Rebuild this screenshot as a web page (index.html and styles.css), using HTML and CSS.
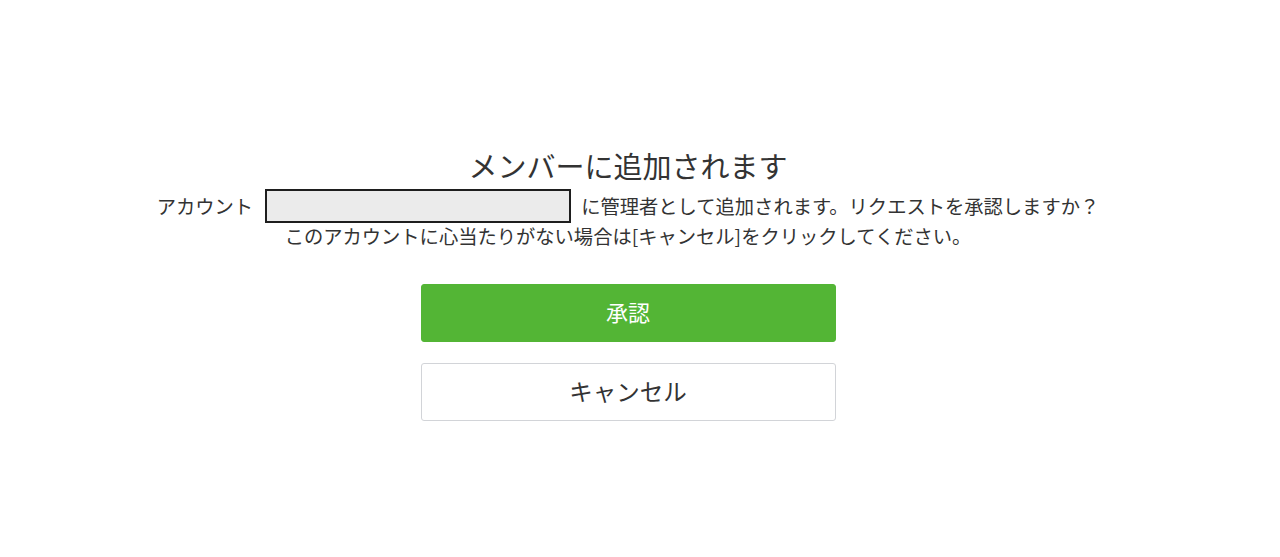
FILE: index.html
```html
<!DOCTYPE html>
<html lang="ja">
<head>
<meta charset="utf-8">
<link rel="stylesheet" href="styles.css">
</head>
<body>
<main class="page">
  <h1 class="title">メンバーに追加されます</h1>
  <p class="line line-account">アカウント<span class="redacted"></span>に管理者として追加されます。リクエストを承認しますか？</p>
  <p class="line line-note">このアカウントに心当たりがない場合は[キャンセル]をクリックしてください。</p>
  <div class="actions">
    <button class="btn btn-primary" type="button">承認</button>
    <button class="btn btn-secondary" type="button">キャンセル</button>
  </div>
</main>
</body>
</html>
```
FILE: styles.css
```css
html, body {
  margin: 0;
  padding: 0;
  background: #fff;
}
body {
  font-family: "Noto Sans CJK JP", "Noto Sans", sans-serif;
  color: #333;
}
.page {
  display: flex;
  flex-direction: column;
  align-items: center;
  padding: 145px 24px 0 0;
}
.title {
  margin: 0;
  font-size: 29px;
  font-weight: 400;
  line-height: 40px;
  color: #333;
}
.line {
  margin: 0;
  font-size: 19.3px;
  line-height: 30px;
  white-space: nowrap;
}
.line-account {
  margin-top: 4px;
  display: flex;
  align-items: center;
  height: 34px;
}
.line-note {
  line-height: 27px;
}
.redacted {
  display: inline-block;
  width: 302px;
  height: 30px;
  margin: 0 10px 0 12px;
  background: #ebebeb;
  border: 2px solid #1e1e1e;
}
.actions {
  margin-top: 34px;
  display: flex;
  flex-direction: column;
  gap: 21px;
}
.btn {
  width: 415px;
  height: 58px;
  border-radius: 3px;
  font-family: inherit;
  cursor: pointer;
  padding: 0;
}
.btn-primary {
  background: #53b535;
  border: 1px solid #53b535;
  color: #fff;
  font-size: 22px;
  padding-bottom: 5px;
}
.btn-secondary {
  background: #fff;
  border: 1px solid #d2d4d8;
  color: #333;
  font-size: 23.5px;
  padding-bottom: 2px;
}
```
